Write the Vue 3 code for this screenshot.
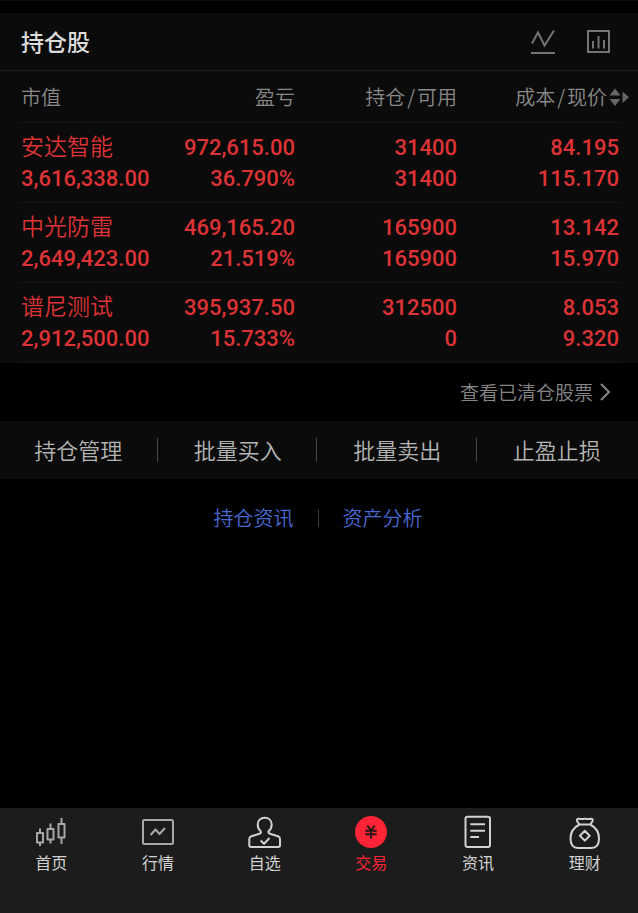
<template>
  <div class="page">
    <section class="panel">
      <header class="panel-head">
        <h1>持仓股</h1>
        <div class="tools">
          <button type="button" aria-label="走势">
            <svg width="26" height="26" viewBox="0 0 26 26">
              <path d="M2 15.5 8 4.5 14.5 17.5 24 2.5M1 25H25" />
            </svg>
          </button>
          <button type="button" aria-label="统计">
            <svg width="26" height="26" viewBox="0 0 26 26">
              <path d="M3 3H24V24H3ZM8 13V20.5M13.5 8V20.5M19 12V20.5" />
            </svg>
          </button>
        </div>
      </header>

      <table>
        <colgroup>
          <col class="col-value" />
          <col class="col-profit" />
          <col class="col-amount" />
          <col />
        </colgroup>
        <thead>
          <tr>
            <th scope="col">市值</th>
            <th scope="col">盈亏</th>
            <th scope="col">持仓<span class="slash">/</span>可用</th>
            <th scope="col">
              <button type="button" class="sort">
                <span>成本<span class="slash">/</span>现价</span>
                <svg width="20" height="20" viewBox="0 0 20 20">
                  <path d="M0.5 8.5 6 1.5 11.5 8.5ZM0.5 12 6 19 11.5 12ZM13.5 4.5 20 10.2 13.5 16Z" />
                </svg>
              </button>
            </th>
          </tr>
        </thead>
        <tbody>
          <tr v-for="stock in stocks" :key="stock.name">
            <td>
              <span class="name">{{ stock.name }}</span>
              <span>{{ stock.value }}</span>
            </td>
            <td>
              <span>{{ stock.profit }}</span>
              <span>{{ stock.rate }}</span>
            </td>
            <td>
              <span>{{ stock.amount }}</span>
              <span>{{ stock.available }}</span>
            </td>
            <td>
              <span>{{ stock.cost }}</span>
              <span>{{ stock.price }}</span>
            </td>
          </tr>
        </tbody>
      </table>
    </section>

    <a href="#" class="cleared">
      <span>查看已清仓股票</span>
      <svg width="12" height="20" viewBox="0 0 12 20">
        <path d="M2 2 10 10 2 18" />
      </svg>
    </a>

    <div class="actions">
      <button v-for="action in actions" :key="action" type="button">
        <span>{{ action }}</span>
      </button>
    </div>

    <div class="links">
      <a href="#">持仓资讯</a>
      <i></i>
      <a href="#">资产分析</a>
    </div>

    <nav class="tabs">
      <button
        v-for="tab in tabs"
        :key="tab.id"
        type="button"
        :class="[tab.id, { active: tab.id === current }]"
        @click="current = tab.id"
      >
        <svg width="40" height="36" viewBox="0 0 40 36">
          <template v-if="tab.id === 'trade'">
            <circle cx="20" cy="18" r="16" />
            <path class="yen" d="M16.2 11.5 20 16.5 23.8 11.5M14.3 16.8H25.7M14.3 20.3H25.7M20 16.5V24.5" />
          </template>
          <path v-else :d="tab.icon" />
        </svg>
        <span>{{ tab.label }}</span>
      </button>
    </nav>
  </div>
</template>

<script setup>
import { ref } from 'vue';

const current = ref('trade');

const stocks = [
  {
    name: '安达智能',
    value: '3,616,338.00',
    profit: '972,615.00',
    rate: '36.790%',
    amount: '31400',
    available: '31400',
    cost: '84.195',
    price: '115.170',
  },
  {
    name: '中光防雷',
    value: '2,649,423.00',
    profit: '469,165.20',
    rate: '21.519%',
    amount: '165900',
    available: '165900',
    cost: '13.142',
    price: '15.970',
  },
  {
    name: '谱尼测试',
    value: '2,912,500.00',
    profit: '395,937.50',
    rate: '15.733%',
    amount: '312500',
    available: '0',
    cost: '8.053',
    price: '9.320',
  },
];

const actions = ['持仓管理', '批量买入', '批量卖出', '止盈止损'];

const tabs = [
  {
    id: 'home',
    label: '首页',
    icon: 'M6 19H12V28.5H6ZM9 14.5V19M9 28.5V32M16.5 15H22.5V25.5H16.5ZM19.5 9.5V15M19.5 25.5V29.5M27.5 10H33.5V23.5H27.5ZM30.5 4V10M30.5 23.5V30',
  },
  {
    id: 'market',
    label: '行情',
    icon: 'M6.5 6H33.5Q35 6 35 7.5V28.5Q35 30 33.5 30H6.5Q5 30 5 28.5V7.5Q5 6 6.5 6ZM12.6 21 17.5 15.5 21.5 20 27 14',
  },
  {
    id: 'favorite',
    label: '自选',
    icon: 'M16 17.5C13.5 15.5 12.7 13 12.7 10.5C12.7 6.5 15.5 3.8 19.7 3.8C23.9 3.8 26.7 6.5 26.7 10.5C26.7 13 25.9 15.5 23.4 17.5C23.2 18.8 24 19.5 25 19.8L33 22.3Q35 23 35 25V31.3Q35 33 33.3 33H6Q4.3 33 4.3 31.3V25Q4.3 23 6.3 22.3L14.4 19.8C15.6 19.4 16.2 18.7 16 17.5M15.6 26.5 19 29.7 24.5 24',
  },
  { id: 'trade', label: '交易' },
  {
    id: 'news',
    label: '资讯',
    icon: 'M9.5 2.7H30Q32 2.7 32 4.7V31Q32 33 30 33H9.5Q7.5 33 7.5 31V4.7Q7.5 2.7 9.5 2.7ZM12.3 10.2H27M12.3 16.8H27M12.3 23H21',
  },
  {
    id: 'finance',
    label: '理财',
    icon: 'M14.5 10.5 12.2 7.4C11.2 5.7 12.3 4.5 14 4.8C16 5.3 17.5 4.8 19.8 4.8C22 4.8 23.6 5.3 25.6 4.8C27.3 4.5 28.4 5.7 27.4 7.4L25.2 10.5ZM14.5 10.5C8.5 13.5 5.5 19 5.5 24.5C5.5 31.5 8 34 13 34H26.5C31.5 34 34 31.5 34 24.5C34 19 31 13.5 25.2 10.5M19.8 16.8 24.7 21.7 19.8 26.6 14.9 21.7Z',
  },
];
</script>

<style>
body {
  margin: 0;
  background: #000;
}
</style>

<style scoped>
.page {
  display: flex;
  flex-direction: column;
  box-sizing: border-box;
  min-height: 100vh;
  padding-top: 12px;
  border-top: 1px solid #0b0b0b;
  background: #000;
  font-family: "Noto Sans CJK SC", sans-serif;
  font-weight: 350;
}

button {
  margin: 0;
  padding: 0;
  border: 0;
  background: none;
  color: inherit;
  font: inherit;
}

a {
  text-decoration: none;
}

svg {
  display: block;
  flex: none;
  fill: none;
  stroke: currentColor;
}

.panel {
  background: #0b0b0b;
}

.panel-head {
  display: flex;
  align-items: center;
  justify-content: space-between;
  box-sizing: border-box;
  height: 58px;
  padding: 0 27px 2px 21px;
  border-bottom: 1px solid #202020;
}

h1 {
  margin: 0;
  color: #dcdcdc;
  font-size: 23px;
  font-weight: 500;
}

.tools {
  display: flex;
  gap: 29px;
  color: #747474;
  stroke-width: 2;
}

table {
  width: calc(100% - 38px);
  margin: 0 18px 0 20px;
  border-spacing: 0;
  table-layout: fixed;
}

.col-value {
  width: 23%;
}

.col-profit {
  width: 23%;
}

.col-amount {
  width: 27%;
}

th,
td {
  padding: 0 1px 0 0;
  border-bottom: 1px solid #171717;
  text-align: right;
}

th:first-child,
td:first-child {
  padding-left: 1px;
  text-align: left;
  white-space: nowrap;
}

th {
  height: 51px;
  color: #8a8a8a;
  font-size: 20px;
  font-weight: 350;
}

.slash {
  margin: 0 2px;
}

.sort {
  display: flex;
  align-items: center;
  justify-content: flex-end;
  gap: 2px;
  width: calc(100% + 10px);
  white-space: nowrap;
}

.sort svg {
  fill: #666;
  stroke: none;
}

td {
  height: 62px;
  padding: 9px 1px 8px 0;
  color: #dd3336;
  font-family: Roboto, "Noto Sans CJK SC", sans-serif;
  font-size: 22px;
  font-weight: 500;
}

td span {
  display: block;
  height: 31px;
  line-height: 31px;
}

td .name {
  font-size: 23px;
  font-weight: 350;
}

.cleared {
  display: flex;
  align-items: center;
  justify-content: flex-end;
  gap: 6px;
  height: 58px;
  padding-right: 27px;
  color: #868686;
  font-size: 19px;
  stroke-width: 2;
}

.cleared span,
.actions span {
  padding-bottom: 2px;
}

.actions {
  display: flex;
  height: 58px;
  background: #0b0b0b;
  color: #b4b4b4;
  font-size: 22px;
}

.actions button {
  display: flex;
  flex: 1;
  align-items: center;
}

.actions span {
  flex: 1;
}

.actions button::after {
  width: 1px;
  height: 24px;
  margin-right: 2px;
  background: #4a4a4a;
  content: "";
}

.actions button:last-child::after {
  background: none;
}

.links {
  display: flex;
  align-items: center;
  justify-content: center;
  gap: 24px;
  height: 77px;
  padding-right: 2px;
  font-size: 20px;
}

.links a {
  color: #4a68d4;
}

.links i {
  width: 1px;
  height: 18px;
  background: #3a3a3a;
}

.tabs {
  display: flex;
  height: 105px;
  margin-top: auto;
  margin-left: -2px;
  background: #1c1c1c;
  color: #d2d2d2;
  font-size: 16px;
  font-weight: 400;
}

.tabs button {
  display: flex;
  flex: 1;
  flex-direction: column;
  align-items: center;
  padding-top: 6px;
  line-height: 24px;
}

.tabs svg {
  stroke-width: 2;
  stroke-linejoin: round;
}

.tabs .home svg,
.tabs .market svg {
  color: #a8a8a8;
}

.tabs .active {
  color: #ff2436;
}

.tabs circle {
  fill: #ff2436;
  stroke: none;
}

.tabs .yen {
  stroke: #2a1517;
}
</style>
